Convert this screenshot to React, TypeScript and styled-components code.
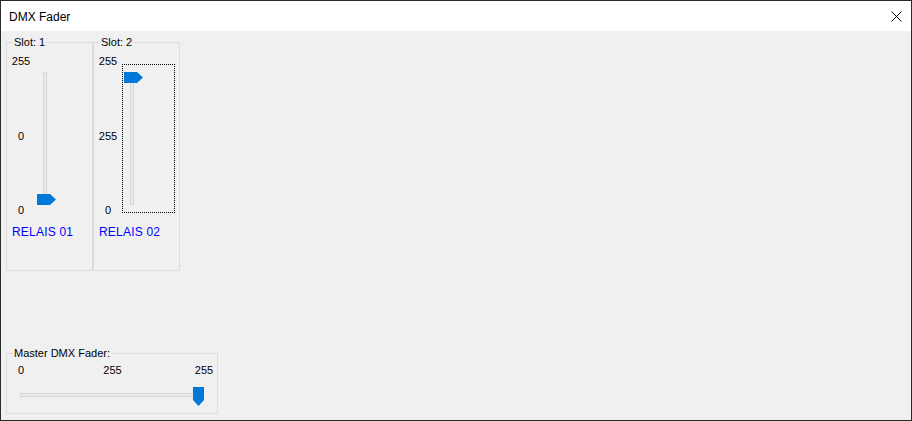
import React from 'react'
import styled, { createGlobalStyle } from 'styled-components'

const GlobalStyle = createGlobalStyle`
  html, body {
    margin: 0;
    padding: 0;
    background: #f0f0f0;
  }
  * {
    box-sizing: border-box;
  }
`

const COLORS = {
  FACE: '#f0f0f0',
  GROUP_BORDER: '#dcdcdc',
  THUMB: '#0078d7',
  TRACK: '#e7eaea',
  TRACK_BORDER: '#d6d6d6',
  LINK: '#0000ff',
}

const Window = styled.div`
  width: 912px;
  height: 421px;
  border: 1px solid #2b2b2b;
  display: flex;
  flex-direction: column;
  font-family: 'Liberation Sans', Arial, sans-serif;
  font-size: 11px;
  color: #000;
  background: ${COLORS.FACE};
`

const TitleBar = styled.div`
  height: 30px;
  flex: none;
  background: #fff;
  display: flex;
  align-items: center;
  justify-content: space-between;
  padding: 0 9px 0 8px;
`

const Title = styled.span`
  font-size: 12px;
  line-height: 16px;
  padding-top: 1px;
`

const CloseIcon = styled.svg`
  width: 11px;
  height: 11px;
  display: block;
`

const Body = styled.div`
  flex: 1;
  display: flex;
  flex-direction: column;
  justify-content: space-between;
  padding: 4px 0 6px 5px;
`

const SlotRow = styled.div`
  display: flex;
`

const Group = styled.fieldset<{ $width: number; $height: number }>`
  margin: 0;
  padding: 0;
  width: ${({ $width }) => $width}px;
  height: ${({ $height }) => $height}px;
  border: 1px solid ${COLORS.GROUP_BORDER};
  min-width: 0;
`

const Legend = styled.legend`
  margin-left: 6px;
  padding: 0 1px;
  line-height: 14px;
  font-size: 11px;
`

const SlotContent = styled.div`
  padding: 5px 0 0 4px;
`

const FaderRow = styled.div`
  display: flex;
  gap: 4px;
`

const ScaleColumn = styled.div`
  width: 20px;
  height: 163px;
  display: flex;
  flex-direction: column;
  justify-content: space-between;
  align-items: center;
  line-height: 14px;
`

const FaderBox = styled.div<{ $focused?: boolean }>`
  position: relative;
  margin-top: 10px;
  width: 53px;
  height: 149px;
  border: 1px dotted ${({ $focused }) => ($focused ? '#000' : 'transparent')};
  padding: 7px 0 0 7px;
`

const VTrack = styled.div`
  width: 4px;
  height: 133px;
  background: ${COLORS.TRACK};
  border: 1px solid ${COLORS.TRACK_BORDER};
`

const Thumb = styled.svg`
  position: absolute;
  display: block;
`

const RelaisLabel = styled.div`
  margin: 8px 0 0 1px;
  font-size: 12px;
  line-height: 14px;
  letter-spacing: 0.2px;
  color: ${COLORS.LINK};
`

const MasterContent = styled.div`
  padding: 3px 3px 0 4px;
`

const MasterScale = styled.div`
  display: flex;
  justify-content: space-between;
  line-height: 14px;

  span {
    width: 20px;
    text-align: center;
  }
`

const HSlider = styled.div`
  position: relative;
  margin: 10px 0 0 9px;
  padding-top: 6px;
  height: 20px;
  width: 184px;
`

const HTrack = styled.div`
  width: 180px;
  height: 4px;
  background: ${COLORS.TRACK};
  border: 1px solid ${COLORS.TRACK_BORDER};
`

const VERTICAL_TRAVEL = 122
const HORIZONTAL_TRAVEL = 173

type SlotProps = {
  slot: number
  labels: [string, string, string]
  value: number
  name: string
  focused?: boolean
}

const VerticalFader = ({ value, focused }: { value: number; focused?: boolean }) => {
  const top = 7 + (1 - value / 255) * VERTICAL_TRAVEL
  return (
    <FaderBox $focused={focused}>
      <VTrack />
      <Thumb width="19" height="11" viewBox="0 0 19 11" style={{ left: 1, top }}>
        <path d="M0 0H13L19 5.5L13 11H0Z" fill={COLORS.THUMB} />
      </Thumb>
    </FaderBox>
  )
}

const SlotGroup = ({ slot, labels, value, name, focused }: SlotProps) => (
  <Group $width={87} $height={236}>
    <Legend>Slot: {slot}</Legend>
    <SlotContent>
      <FaderRow>
        <ScaleColumn>
          {labels.map((label, i) => (
            <span key={i}>{label}</span>
          ))}
        </ScaleColumn>
        <VerticalFader value={value} focused={focused} />
      </FaderRow>
      <RelaisLabel>{name}</RelaisLabel>
    </SlotContent>
  </Group>
)

const MasterFader = ({ value }: { value: number }) => (
  <Group $width={212} $height={68}>
    <Legend>Master DMX Fader:</Legend>
    <MasterContent>
      <MasterScale>
        <span>0</span>
        <span>255</span>
        <span>255</span>
      </MasterScale>
      <HSlider>
        <HTrack />
        <Thumb
          width="11"
          height="19"
          viewBox="0 0 11 19"
          style={{ top: 0, left: (value / 255) * HORIZONTAL_TRAVEL }}
        >
          <path d="M0 0H11V13L5.5 19L0 13Z" fill={COLORS.THUMB} />
        </Thumb>
      </HSlider>
    </MasterContent>
  </Group>
)

const App = () => (
  <>
    <GlobalStyle />
    <Window>
      <TitleBar>
        <Title>DMX Fader</Title>
        <CloseIcon viewBox="0 0 11 11">
          <path d="M0.5 0.5L10.5 10.5M10.5 0.5L0.5 10.5" stroke="#000" strokeWidth="1" />
        </CloseIcon>
      </TitleBar>
      <Body>
        <SlotRow>
          <SlotGroup slot={1} labels={['255', '0', '0']} value={0} name="RELAIS 01" />
          <SlotGroup slot={2} labels={['255', '255', '0']} value={255} name="RELAIS 02" focused />
        </SlotRow>
        <MasterFader value={255} />
      </Body>
    </Window>
  </>
)

export default App
